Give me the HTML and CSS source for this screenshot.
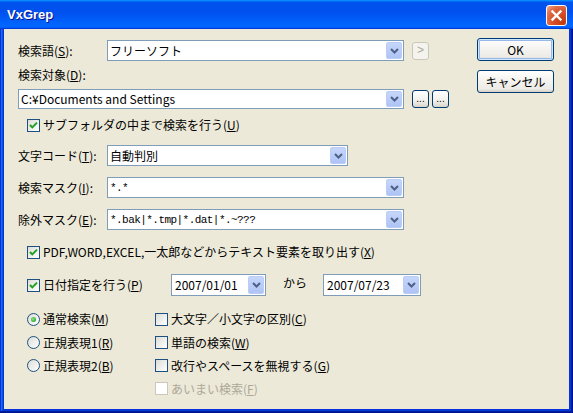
FILE: index.html
```html
<!DOCTYPE html>
<html lang="ja">
<head>
<meta charset="utf-8">
<title>VxGrep</title>
<link rel="stylesheet" href="styles.css">
</head>
<body>
<div class="window">
  <div class="titlebar">
    <span class="title">VxGrep</span>
    <span class="close"><svg width="19" height="19" viewBox="0 0 19 19"><path d="M5.5 5.5 L13.5 13.5 M13.5 5.5 L5.5 13.5" stroke="#fff" stroke-width="2.4" stroke-linecap="square"/></svg></span>
  </div>
  <div class="client">
    <div class="form">
      <div class="row r1">
        <span class="label">検索語(<u>S</u>):</span>
        <div class="combo w297"><span class="val">フリーソフト</span><span class="dd"><svg width="9" height="6" viewBox="0 0 9 6"><path d="M1 1 L4.5 4.5 L8 1" fill="none" stroke="#4D6185" stroke-width="2"/></svg></span></div>
        <button class="mini disabled">&gt;</button>
      </div>
      <div class="row r2"><span class="label">検索対象(<u>D</u>):</span></div>
      <div class="row r3">
        <div class="combo w386"><span class="val">C:¥Documents and Settings</span><span class="dd"><svg width="9" height="6" viewBox="0 0 9 6"><path d="M1 1 L4.5 4.5 L8 1" fill="none" stroke="#4D6185" stroke-width="2"/></svg></span></div>
        <button class="mini">...</button>
        <button class="mini second">...</button>
      </div>
      <div class="row r4 indent">
        <span class="check"><svg width="11" height="11" viewBox="0 0 11 11"><path d="M2 5 L4.3 7.4 L9 2.6" fill="none" stroke="#21A121" stroke-width="2"/></svg></span>
        <span class="text">サブフォルダの中まで検索を行う(<u>U</u>)</span>
      </div>
      <div class="row r5">
        <span class="label">文字コード(<u>T</u>):</span>
        <div class="combo w241"><span class="val">自動判別</span><span class="dd"><svg width="9" height="6" viewBox="0 0 9 6"><path d="M1 1 L4.5 4.5 L8 1" fill="none" stroke="#4D6185" stroke-width="2"/></svg></span></div>
      </div>
      <div class="row r6">
        <span class="label">検索マスク(<u>I</u>):</span>
        <div class="combo w297"><span class="val mono">*.*</span><span class="dd"><svg width="9" height="6" viewBox="0 0 9 6"><path d="M1 1 L4.5 4.5 L8 1" fill="none" stroke="#4D6185" stroke-width="2"/></svg></span></div>
      </div>
      <div class="row r7">
        <span class="label">除外マスク(<u>E</u>):</span>
        <div class="combo w297"><span class="val mono">*.bak|*.tmp|*.dat|*.~???</span><span class="dd"><svg width="9" height="6" viewBox="0 0 9 6"><path d="M1 1 L4.5 4.5 L8 1" fill="none" stroke="#4D6185" stroke-width="2"/></svg></span></div>
      </div>
      <div class="row r8 indent">
        <span class="check"><svg width="11" height="11" viewBox="0 0 11 11"><path d="M2 5 L4.3 7.4 L9 2.6" fill="none" stroke="#21A121" stroke-width="2"/></svg></span>
        <span class="text">PDF,WORD,EXCEL,一太郎などからテキスト要素を取り出す(<u>X</u>)</span>
      </div>
      <div class="row r9 indent">
        <div class="datecheck">
          <span class="check"><svg width="11" height="11" viewBox="0 0 11 11"><path d="M2 5 L4.3 7.4 L9 2.6" fill="none" stroke="#21A121" stroke-width="2"/></svg></span>
          <span class="text">日付指定を行う(<u>P</u>)</span>
        </div>
        <div class="combo w95 date"><span class="val">2007/01/01</span><span class="dd"><svg width="9" height="6" viewBox="0 0 9 6"><path d="M1 1 L4.5 4.5 L8 1" fill="none" stroke="#4D6185" stroke-width="2"/></svg></span></div>
        <span class="kara">から</span>
        <div class="combo w98 date"><span class="val">2007/07/23</span><span class="dd"><svg width="9" height="6" viewBox="0 0 9 6"><path d="M1 1 L4.5 4.5 L8 1" fill="none" stroke="#4D6185" stroke-width="2"/></svg></span></div>
      </div>
      <div class="opts">
        <div class="opt"><span class="radio on"><span class="dot"></span></span><span class="text">通常検索(<u>M</u>)</span></div>
        <div class="opt"><span class="check"></span><span class="text">大文字／小文字の区別(<u>C</u>)</span></div>
        <div class="opt"><span class="radio"></span><span class="text">正規表現1(<u>R</u>)</span></div>
        <div class="opt"><span class="check"></span><span class="text">単語の検索(<u>W</u>)</span></div>
        <div class="opt"><span class="radio"></span><span class="text">正規表現2(<u>B</u>)</span></div>
        <div class="opt"><span class="check"></span><span class="text">改行やスペースを無視する(<u>G</u>)</span></div>
        <div class="opt"></div>
        <div class="opt off"><span class="check"></span><span class="text">あいまい検索(<u>F</u>)</span></div>
      </div>
    </div>
    <div class="side">
      <button class="btn default">OK</button>
      <button class="btn cancel">キャンセル</button>
    </div>
  </div>
</div>
</body>
</html>
```

FILE: styles.css
```css
* { box-sizing: border-box; }
html, body { margin: 0; padding: 0; }
body {
  width: 573px;
  height: 413px;
  overflow: hidden;
  background: #ECE9D8;
  font-family: "Noto Sans CJK JP", "Liberation Sans", sans-serif;
  font-size: 12px;
  line-height: 14px;
  color: #000;
}
u { text-decoration: underline; text-underline-offset: 1px; }

.window {
  width: 573px;
  height: 413px;
  display: flex;
  flex-direction: column;
  background: #0831D9;
  box-shadow: inset -1px -1px #00138C, inset -2px -2px #001EA0, inset 1px 1px #0831D9, inset 2px 2px #166AEE, inset -3px -3px #003BDA, inset 3px 3px #0855DD;
  padding: 0 4px 4px 4px;
}
.titlebar {
  flex: 0 0 29px;
  height: 29px;
  margin: 0 -4px;
  display: flex;
  align-items: center;
  padding: 0 6px 0 7px;
  background: linear-gradient(180deg, #0997FF, #0053EE 8%, #0050EE 40%, #0066FF 88%, #0066FF 93%, #005BFF 95%, #003DD7 96%, #003DD7);
}
.title {
  flex: 1;
  font-family: "Liberation Sans", sans-serif;
  font-weight: bold;
  font-size: 13px;
  color: #fff;
  text-shadow: 1px 1px #0F1089;
  padding-top: 1px;
}
.close {
  width: 21px;
  height: 21px;
  border: 1px solid #fff;
  border-radius: 3px;
  background: radial-gradient(circle at 85% 85%, #C33A10 0%, #D8502A 45%, #E2704C 75%, #F2B39A 100%);
  display: flex;
  align-items: center;
  justify-content: center;
  margin-top: 1px;
}
.close svg { display: block; }

.client {
  flex: 1;
  display: flex;
  background: #ECE9D8;
}
.form {
  flex: 0 0 473px;
  padding-left: 14px;
  display: flex;
  flex-direction: column;
}
.side {
  flex: 0 0 77px;
  padding-top: 9px;
  display: flex;
  flex-direction: column;
}

.row { display: flex; align-items: center; }
.r1 { height: 21px; margin-top: 11px; }
.r2 { height: 14px; margin-top: 7px; }
.r3 { height: 20px; margin-top: 7px; }
.r4 { height: 14px; margin-top: 9px; }
.r5 { height: 21px; margin-top: 13px; }
.r6 { height: 21px; margin-top: 11px; }
.r7 { height: 21px; margin-top: 11px; }
.r8 { height: 14px; margin-top: 15px; }
.r9 { height: 22px; margin-top: 15px; }
.indent { padding-left: 9px; }

.label { flex: 0 0 89px; white-space: nowrap; }
.text { white-space: nowrap; margin-left: 3px; }

.combo {
  height: 100%;
  display: flex;
  border: 1px solid #7F9DB9;
  background: #fff;
  padding: 1px;
}
.w297 { width: 297px; }
.w386 { width: 386px; }
.w241 { width: 241px; }
.w95 { width: 95px; }
.w98 { width: 98px; }
.val {
  flex: 1;
  display: flex;
  align-items: center;
  padding-left: 1px;
  white-space: nowrap;
  overflow: hidden;
}
.date .val { padding-left: 2px; }
.mono {
  font-family: "Liberation Mono", monospace;
  font-size: 11px;
  letter-spacing: -0.55px;
}
.dd {
  flex: 0 0 16px;
  border: 1px solid #B9CDF7;
  border-radius: 2px;
  background: linear-gradient(180deg, #C6D6FB 0%, #B8CBF8 60%, #AFC4F5 100%);
  display: flex;
  align-items: center;
  justify-content: center;
}
.dd svg { display: block; }

.mini {
  width: 17px;
  height: 18px;
  margin-left: 8px;
  padding: 0;
  border: 1px solid #003C74;
  border-radius: 3px;
  background: linear-gradient(180deg, #FFFFFF 0%, #F2F1EC 60%, #D9D4CA 100%);
  font-family: "Liberation Sans", sans-serif;
  font-size: 10px;
  line-height: 10px;
  color: #000;
  display: flex;
  align-items: flex-end;
  justify-content: center;
  padding-bottom: 3px;
}
.mini.second { margin-left: 3px; }
.mini.disabled {
  border-color: #C9C7BA;
  background: #F4F3EE;
  color: #ACA899;
  font-size: 12px;
  align-items: center;
  padding-bottom: 1px;
}

.check {
  flex: 0 0 13px;
  width: 13px;
  height: 13px;
  border: 1px solid #1C5180;
  background: linear-gradient(135deg, #DCDCD7 0%, #FFFFFF 100%);
  display: flex;
  align-items: center;
  justify-content: center;
}
.check svg { display: block; }
.radio {
  flex: 0 0 13px;
  width: 13px;
  height: 13px;
  border-radius: 50%;
  border: 1px solid #1C5180;
  background: linear-gradient(135deg, #DCDCD7 0%, #FFFFFF 100%);
  display: flex;
  align-items: center;
  justify-content: center;
}
.dot {
  width: 5px;
  height: 5px;
  border-radius: 50%;
  background: radial-gradient(circle at 40% 40%, #8CE68A 0%, #21A121 80%);
}

.datecheck { flex: 0 0 144px; display: flex; align-items: center; }
.kara { margin-left: 17px; width: 40px; padding-bottom: 4px; }

.opts {
  margin-top: 11px;
  padding-left: 9px;
  display: grid;
  grid-template-columns: 128px 1fr;
  grid-template-rows: 24px 23px 23px 23px;
}
.opt { display: flex; align-items: center; }
.opt.off .check { border-color: #CAC8BB; background: #FFFFFF; }
.opt.off .text { color: #ACA899; }

.btn {
  width: 77px;
  height: 23px;
  padding: 0;
  border: 1px solid #003C74;
  border-radius: 3px;
  background: linear-gradient(180deg, #FFFFFF 0%, #F3F2EE 50%, #ECEBE6 85%, #D6D0C5 100%);
  font-family: "Noto Sans CJK JP", "Liberation Sans", sans-serif;
  font-size: 12px;
  line-height: 14px;
  color: #000;
}
.btn.default {
  box-shadow: inset 0 0 0 1px #CEE7FF, inset 0 0 0 2px #98B8EA;
}
.btn.cancel { margin-top: 9px; }
```
